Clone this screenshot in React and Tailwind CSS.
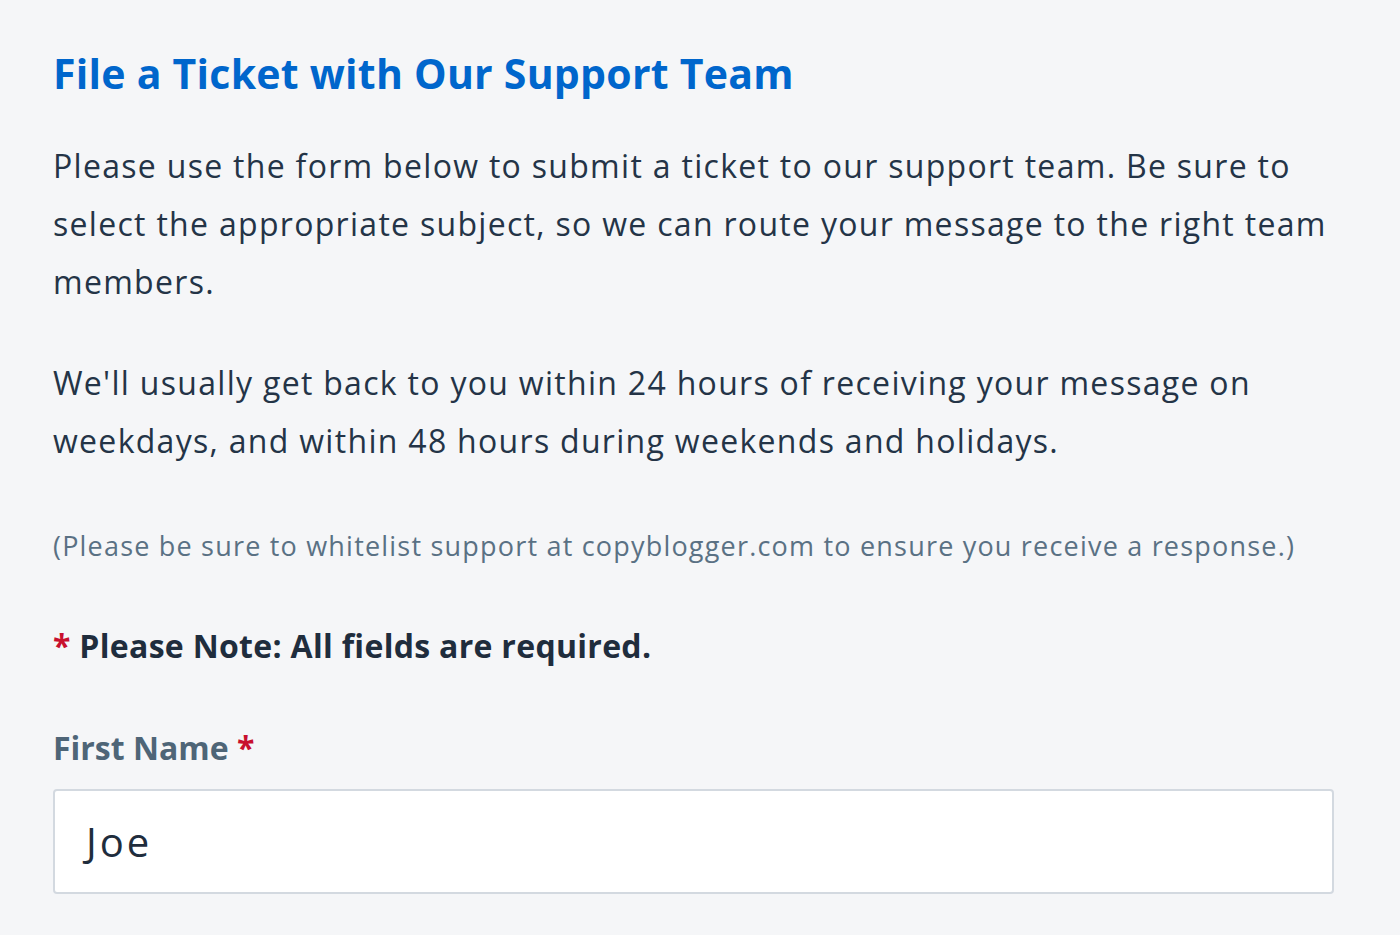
export default function App() {
  return (
    <div className="min-h-[935px] bg-[#f5f6f8] font-['Open_Sans','Noto_Sans',sans-serif]">
      <div className="w-[1281px] pl-[53px] pt-[48px] box-content">
        <h1 className="text-[41px] font-bold leading-[50px] tracking-[0.25px] text-[#0066cc]">
          File a Ticket with Our Support Team
        </h1>
        <p className="mt-[39px] text-[32px] leading-[58px] tracking-[1.3px] text-[#243447]">
          Please use the form below to submit a ticket to our support team. Be sure to select the appropriate subject, so we can route your message to the right team members.
        </p>
        <p className="mt-[43px] text-[32px] leading-[58px] tracking-[1.3px] text-[#243447]">
          We'll usually get back to you within 24 hours of receiving your message on weekdays, and within 48 hours during weekends and holidays.
        </p>
        <p className="mt-[56px] text-[27px] leading-[40px] tracking-[1.2px] text-[#5a7184]">
          (Please be sure to whitelist support at copyblogger.com to ensure you receive a response.)
        </p>
        <p className="mt-[60px] text-[32px] font-bold leading-[40px] tracking-[0.3px] text-[#1f2d3d]">
          <span className="text-[#c8102e]">*</span> Please Note: All fields are required.
        </p>
        <label className="mt-[62px] block text-[32px] font-bold leading-[40px] text-[#4e6577]">
          First Name <span className="text-[#c8102e]">*</span>
        </label>
        <div className="mt-[21px] flex h-[105px] items-center rounded-[4px] border-2 border-[#d3d9e0] bg-white px-[31px] text-[40px] tracking-[3px] text-[#1f2d3d]">
          Joe
        </div>
      </div>
    </div>
  );
}
